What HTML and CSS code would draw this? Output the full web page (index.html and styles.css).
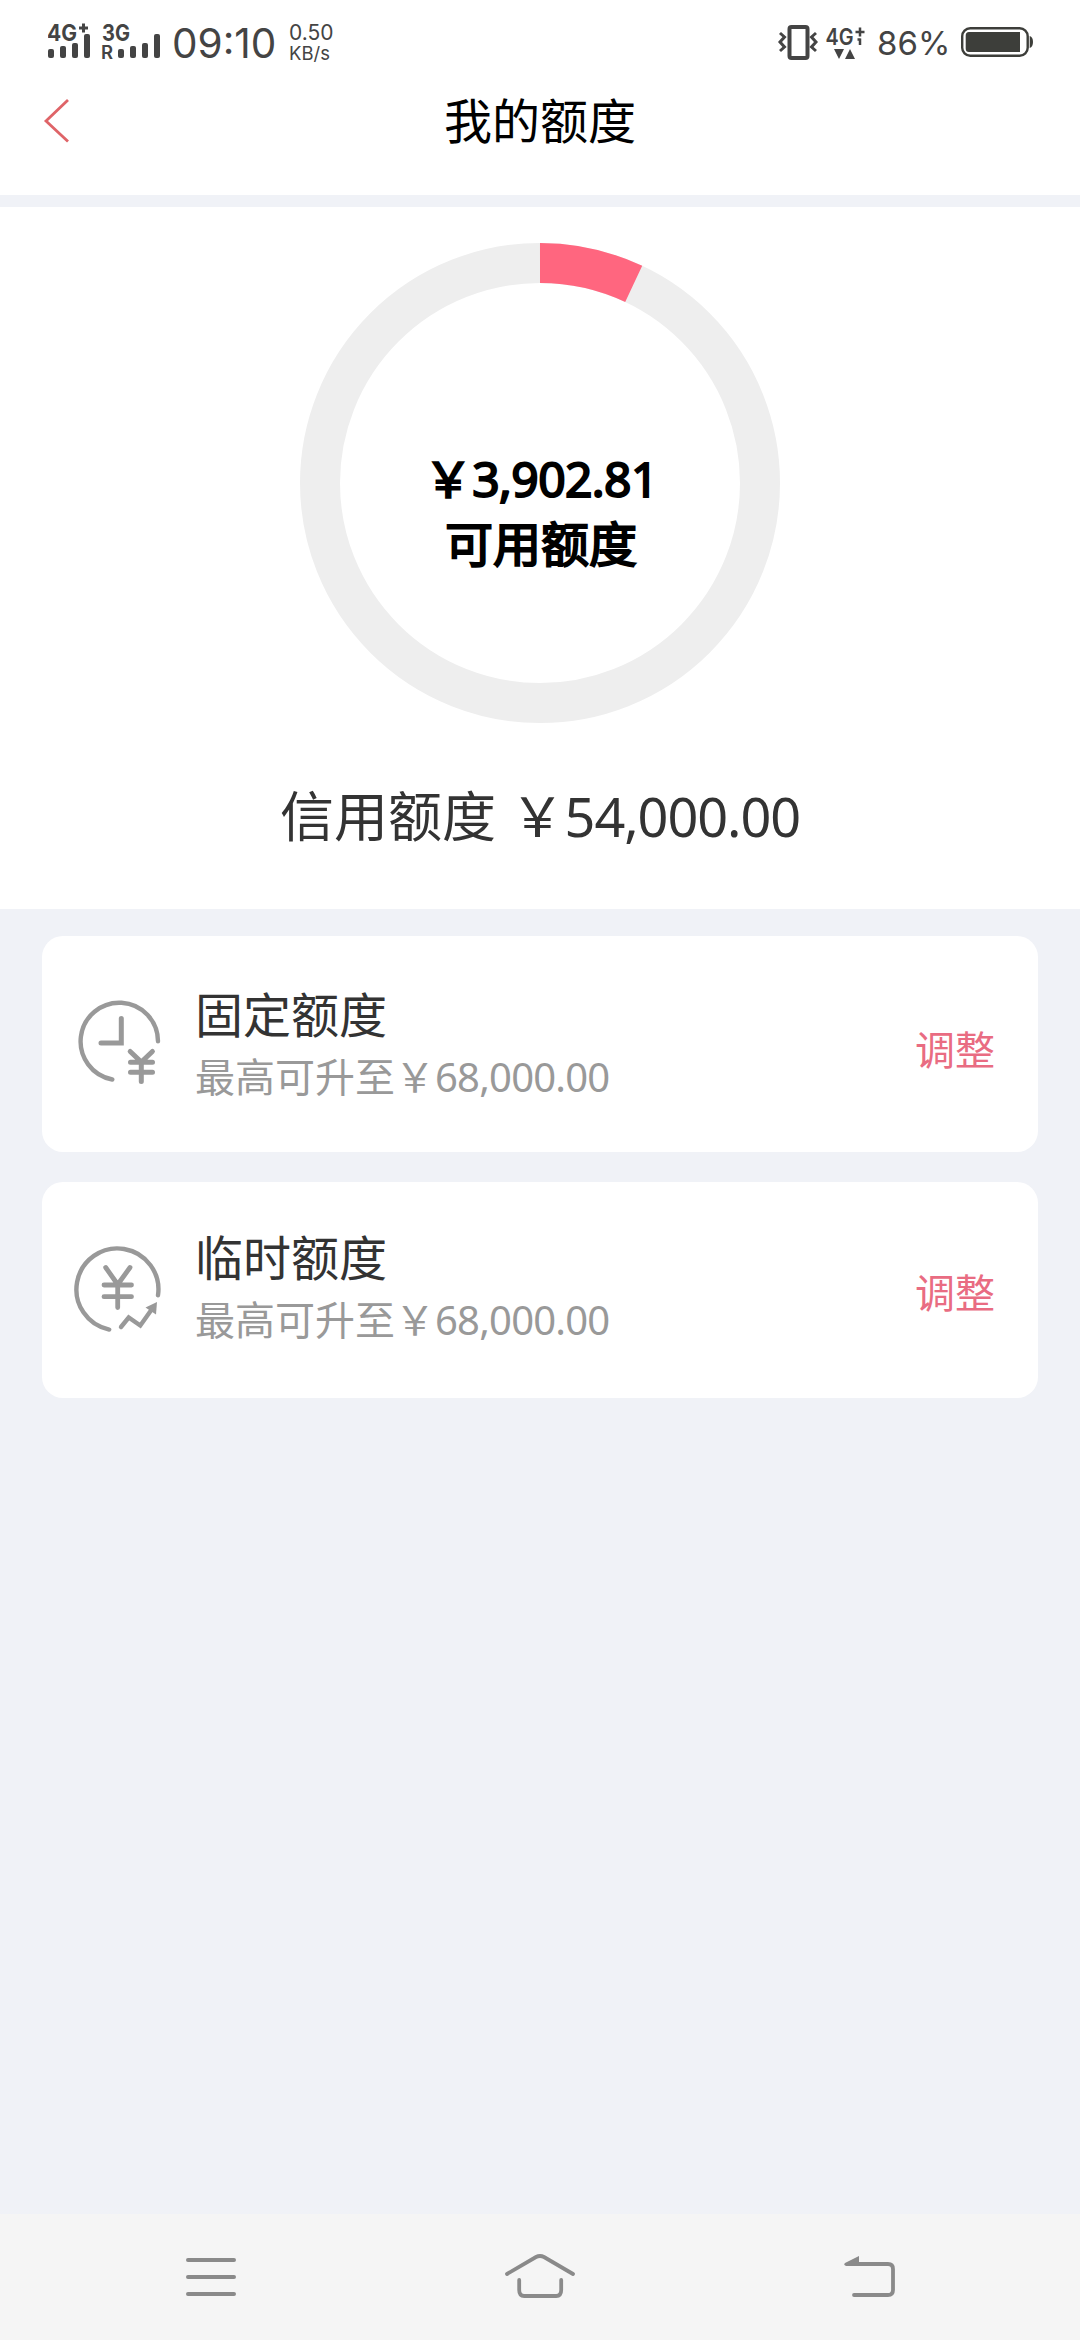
FILE: index.html
```html
<!DOCTYPE html>
<html lang="zh-CN">
<head>
<meta charset="utf-8">
<title>我的额度</title>
<link rel="stylesheet" href="styles.css">
</head>
<body>
<div class="screen">
  <div class="status">
    <svg class="signals" width="114" height="44" viewBox="48 18 114 44">
      <text class="net" x="47" y="40.500" textLength="30" lengthAdjust="spacingAndGlyphs">4G</text>
      <path d="M79 28h9M83.500 23.500v9" stroke="#444" stroke-width="3"/>
      <text class="net" x="102" y="40.500" textLength="28" lengthAdjust="spacingAndGlyphs">3G</text>
      <text class="roam" x="101" y="58.500">R</text>
      <g fill="#444">
        <rect x="48" y="49" width="6" height="9" rx="2"/><rect x="60" y="46" width="6" height="12" rx="2"/><rect x="72" y="43" width="6" height="15" rx="2"/><rect x="84" y="34" width="6" height="24" rx="2"/>
        <rect x="118" y="49" width="6" height="9" rx="2"/><rect x="130" y="46" width="6" height="12" rx="2"/><rect x="142" y="43" width="6" height="15" rx="2"/><rect x="154" y="34" width="6" height="24" rx="2"/>
      </g>
    </svg>
    <div class="clock">09:10</div>
    <div class="speed"><span>0.50</span><span class="unit">KB/s</span></div>
    <svg class="radio" width="90" height="44" viewBox="776 20 90 44">
      <rect x="788.500" y="27" width="18" height="31" rx="2" fill="none" stroke="#444" stroke-width="4"/>
      <path d="M779 33l4.500 4-4.500 5 4.500 5-4.500 4M815 33l-4.500 4 4.500 5-4.500 5 4.500 4" fill="none" stroke="#444" stroke-width="3"/>
      <text class="net4" x="824.500" y="45" textLength="28" lengthAdjust="spacingAndGlyphs">4G</text>
      <path d="M854.500 32h9M859 27.500v9M859 38.500v6.500M856.500 39.500h3" fill="none" stroke="#444" stroke-width="2.500"/>
      <path d="M833 49h10l-5 10zM844 59h10l-5-10z" fill="#444"/>
    </svg>
    <div class="percent">86%</div>
    <svg class="battery" width="74" height="32" viewBox="959 26 74 32">
      <rect x="961.200" y="28.200" width="65.500" height="27.600" rx="8" fill="none" stroke="#3d3e3a" stroke-width="2.400"/>
      <path d="M968 32h51v20h-51q-3.300 0-3.300-3.500v-13q0-3.500 3.300-3.500zM1028.700 36q3.300 1 3.300 6t-3.300 6z" fill="#3d3e3a"/>
    </svg>
  </div>

  <header class="header">
    <svg class="back" width="28" height="46" viewBox="43 98 28 46"><path d="M68 100L46 121l22 20.500" fill="none" stroke="#df6468" stroke-width="2.800"/></svg>
    <h1>我的额度</h1>
  </header>

  <section class="summary">
    <div class="donut">
      <svg class="ring" width="480" height="480" viewBox="0 0 480 480">
        <circle cx="240" cy="240" r="220" fill="none" stroke="#eee" stroke-width="40"/>
        <path d="M240 20A220 220 0 0 1 333.700 40.900" fill="none" stroke="#ff667f" stroke-width="40"/>
      </svg>
      <div class="available">
        <div>￥<span class="num">3,902.81</span></div>
        <div>可用额度</div>
      </div>
    </div>
    <div class="credit">信用额度 ￥<span class="num">54,000.00</span></div>
  </section>

  <main class="cards">
    <div class="card">
      <svg class="icon" width="90" height="92" viewBox="74 998 90 92">
        <g fill="none" stroke="#999" stroke-linecap="round" stroke-width="4.400">
          <path d="M158 1041.300A38.700 38.700 0 1 0 112.300 1079.500"/>
          <path d="M121.300 1018.500V1043H101M130.200 1051.500l11.100 10.500 11.100-10.500M130.500 1062.300h22M130.500 1072.300h22M141.300 1062v19.500" stroke-width="5"/>
        </g>
      </svg>
      <div class="info"><div class="name">固定额度</div><div class="limit">最高可升至￥<span class="num">68,000.00</span></div></div>
      <div class="adjust">调整</div>
    </div>
    <div class="card temporary">
      <svg class="icon" width="90" height="90" viewBox="74 1243 90 90">
        <g fill="none" stroke="#999" stroke-linecap="round" stroke-width="4.400">
          <path d="M158 1295.300A41 41 0 1 0 109.200 1329.600"/>
          <path d="M105.700 1267.500l12 17 12.300-17M104 1285h27.500M104 1296.700h27.500M117.700 1284v23.500" stroke-width="4.800"/>
          <path d="M121 1327l7.700-9.500 11.600 8L152 1309"/>
        </g>
        <path d="M157 1302l-11.500 5.500 10.500 7z" fill="#999"/>
      </svg>
      <div class="info"><div class="name">临时额度</div><div class="limit">最高可升至￥<span class="num">68,000.00</span></div></div>
      <div class="adjust">调整</div>
    </div>
  </main>

  <nav class="nav">
    <svg width="54" height="44" viewBox="184 2255 54 44"><path d="M188 2260h46M188 2277h46M188 2294h46" stroke="#8a8a8a" stroke-width="4" stroke-linecap="round"/></svg>
    <svg width="74" height="48" viewBox="504 2253 74 48"><path d="M508 2274l29-17q4-2 8 0l29 17M520.200 2280v10q0 6 5 6h32q5 0 5-6v-10" fill="none" stroke="#8a8a8a" stroke-width="3.800" stroke-linecap="round"/></svg>
    <svg width="54" height="46" viewBox="841 2253 54 46"><path d="M850 2263h37q5 0 5 5v21q0 5-5 5h-34" fill="none" stroke="#8a8a8a" stroke-width="3.800" stroke-linecap="round"/><path d="M844 2262l14-7v9.900h-13q-3-1-1-2.900z" fill="#8a8a8a"/></svg>
  </nav>
</div>
</body>
</html>
```
FILE: styles.css
```css
* { box-sizing: border-box; }
body { margin: 0; }
svg { display: block; flex: none; }

.screen {
  width: 1080px;
  height: 2340px;
  display: flex;
  flex-direction: column;
  background: #f0f2f7;
  font-family: "Noto Sans CJK SC", sans-serif;
  color: #333;
  white-space: nowrap;
  overflow: hidden;
}

.num { font-family: "Noto Sans", sans-serif; letter-spacing: -0.02em; }

/* status bar */
.status {
  flex: none;
  height: 84px;
  display: flex;
  align-items: flex-start;
  padding: 18px 46px 0 48px;
  background: #fff;
  color: #444;
  font-family: Inter, sans-serif;
}
.net { font: 700 23px Inter, sans-serif; fill: #444; }
.net4 { font: 600 23px Inter, sans-serif; fill: #444; }
.roam { font: 600 18.5px Inter, sans-serif; fill: #444; }
.clock { width: 117px; margin-left: 10px; padding-top: 6px; font-size: 40.5px; line-height: 40px; }
.speed { display: flex; flex-direction: column; margin-top: 4px; font-size: 21px; line-height: 21px; }
.speed .unit { font-size: 18.5px; line-height: 20px; }
.radio { margin: 2px 10px 0 auto; }
.percent { width: 83px; padding-top: 5px; font-size: 33px; line-height: 40px; }
.battery { margin-top: 8px; }

/* title bar */
.header {
  flex: none;
  height: 111px;
  display: grid;
  grid-template-columns: 1fr auto 1fr;
  align-items: start;
  padding: 0 43px;
  background: #fff;
}
.back { margin-top: 14px; }
h1 { margin: 0; font-size: 48px; line-height: 68px; font-weight: 400; color: #000; }

/* quota chart */
.summary {
  flex: none;
  height: 702px;
  margin-top: 12px;
  padding-top: 36px;
  display: flex;
  flex-direction: column;
  align-items: center;
  background: #fff;
}
.donut { display: grid; place-items: center; }
.ring, .available { grid-area: 1 / 1; }
.available {
  padding: 51px 0 0 2px;
  text-align: center;
  font-size: 48px;
  line-height: 63px;
  color: #000;
  -webkit-text-stroke: 2px #000;
}
.available .num { letter-spacing: -0.013em; }
.credit { margin-top: 51px; font-size: 54px; line-height: 80px; word-spacing: 2.5px; }

/* quota cards */
.cards {
  flex: 1;
  display: flex;
  flex-direction: column;
  gap: 30px;
  padding: 27px 42px;
}
.card {
  height: 216px;
  display: flex;
  align-items: flex-start;
  padding: 46px 43px 0 32px;
  border-radius: 21px;
  background: #fff;
}
.card.temporary { padding-top: 43px; }
.icon { margin-top: 16px; }
.temporary .icon { margin-top: 18px; }
.info { flex: 1; margin-left: 31px; }
.name { font-size: 48px; line-height: 60px; }
.limit { margin-top: 3px; font-size: 40px; line-height: 60px; color: #999; }
.adjust { margin-top: 36px; font-size: 40px; line-height: 60px; color: #e96c82; }

/* system navigation */
.nav {
  flex: none;
  height: 126px;
  display: flex;
  align-items: center;
  justify-content: space-between;
  padding: 0 184px;
  background: #f5f5f5;
}
```
